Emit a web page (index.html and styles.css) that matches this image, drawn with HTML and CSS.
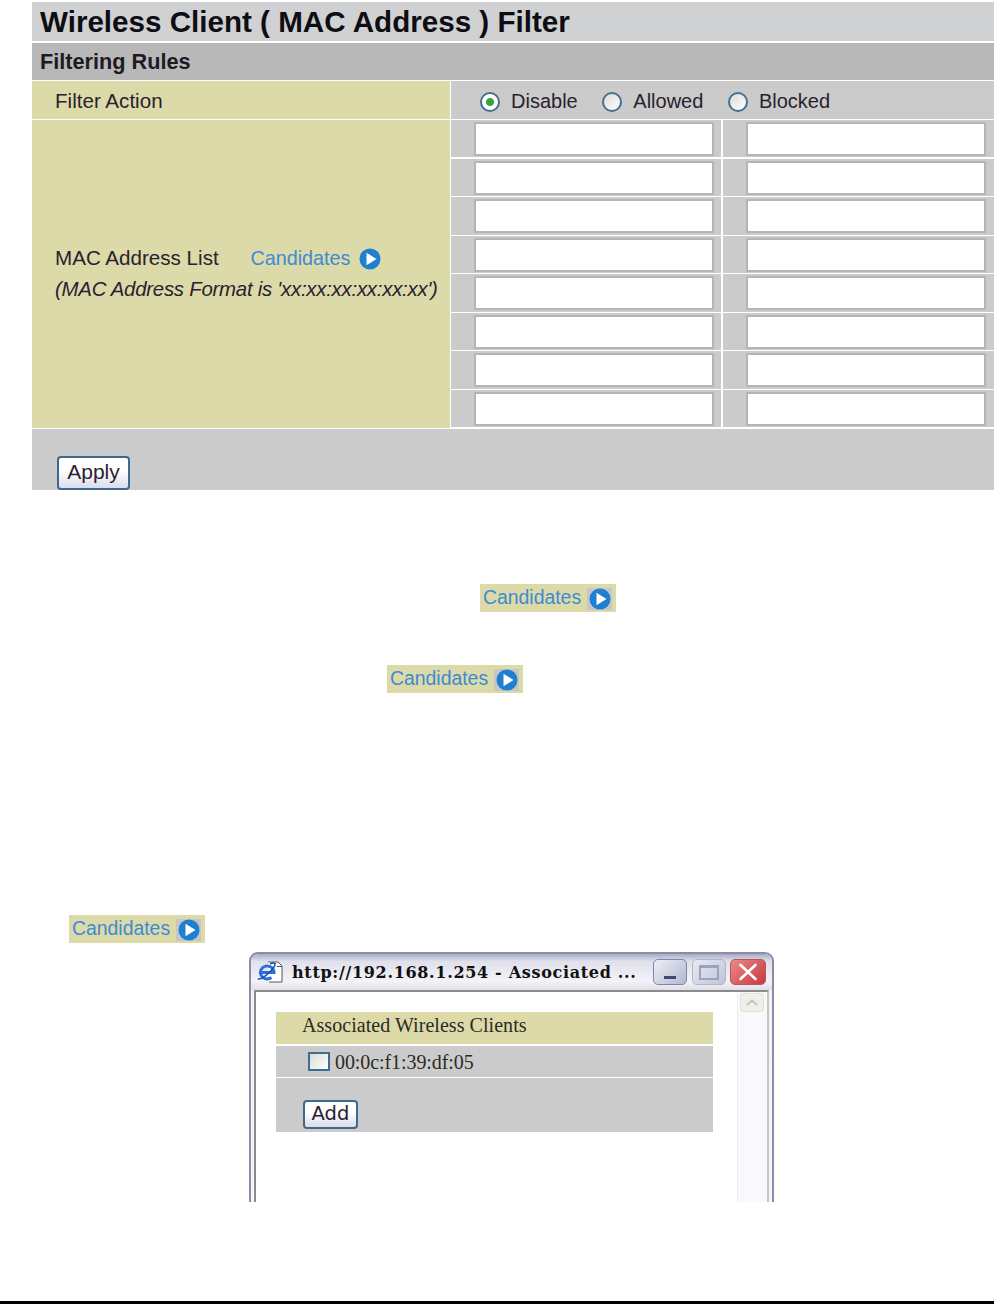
FILE: index.html
```html
<!DOCTYPE html>
<html lang="en">
<head>
<meta charset="utf-8">
<title>Wireless Client ( MAC Address ) Filter</title>
<link rel="stylesheet" href="styles.css">
</head>
<body>
<svg class="defs" width="0" height="0" aria-hidden="true">
  <symbol id="go" viewBox="0 0 22 22">
    <circle cx="11" cy="11" r="10.5" fill="#1f7fd0"/>
    <path d="M7.5 4.8 L17.5 11 L7.5 17.2 Z" fill="#fff"/>
  </symbol>
</svg>
<main class="panel">
  <h1 class="title">Wireless Client ( MAC Address ) Filter</h1>
  <h2 class="subtitle">Filtering Rules</h2>
  <div class="action-row">
    <div class="label-cell action-label">Filter Action</div>
    <div class="radio-cell">
      <label class="radio-item"><input class="radio" type="radio" name="a" checked>Disable</label>
      <label class="radio-item"><input class="radio" type="radio" name="a">Allowed</label>
      <label class="radio-item"><input class="radio" type="radio" name="a">Blocked</label>
    </div>
  </div>
  <div class="list-row">
    <div class="label-cell list-label">
      <div class="list-line">MAC Address List <a class="cand inline-cand">Candidates <svg class="go"><use href="#go"/></svg></a></div>
      <div class="format">(MAC Address Format is 'xx:xx:xx:xx:xx:xx')</div>
    </div>
    <div class="inputs">
      <div class="cell"><input class="mac" type="text"></div><div class="cell"><input class="mac" type="text"></div>
      <div class="cell"><input class="mac" type="text"></div><div class="cell"><input class="mac" type="text"></div>
      <div class="cell"><input class="mac" type="text"></div><div class="cell"><input class="mac" type="text"></div>
      <div class="cell"><input class="mac" type="text"></div><div class="cell"><input class="mac" type="text"></div>
      <div class="cell"><input class="mac" type="text"></div><div class="cell"><input class="mac" type="text"></div>
      <div class="cell"><input class="mac" type="text"></div><div class="cell"><input class="mac" type="text"></div>
      <div class="cell"><input class="mac" type="text"></div><div class="cell"><input class="mac" type="text"></div>
      <div class="cell"><input class="mac" type="text"></div><div class="cell"><input class="mac" type="text"></div>
    </div>
  </div>
  <div class="apply-row"><button class="btn apply" type="button">Apply</button></div>
</main>

<div class="chip-line first"><a class="cand chip"><span class="chip-text">Candidates</span><span class="go-box"><svg class="go"><use href="#go"/></svg></span></a></div>
<div class="chip-line second"><a class="cand chip"><span class="chip-text">Candidates</span><span class="go-box"><svg class="go"><use href="#go"/></svg></span></a></div>
<div class="chip-line third"><a class="cand chip"><span class="chip-text">Candidates</span><span class="go-box"><svg class="go"><use href="#go"/></svg></span></a></div>

<section class="window">
  <header class="titlebar">
    <svg class="ie" viewBox="0 0 26 24" aria-hidden="true">
      <path d="M11 2h10l4 4v16H12" fill="#fff" stroke="#555" stroke-width="1"/>
      <path d="M20 6v0.5h5" fill="none" stroke="#555" stroke-width="1"/>
      <path d="M4.5 12.5 H17 A6.8 6.5 0 1 0 14.5 17.5" fill="none" stroke="#2b6fdc" stroke-width="3"/>
      <path d="M1 18.5 C2 20 6 18 10 14.5 C15 10 19 6 18 3.5 C17 2.5 15 3 13 4" fill="none" stroke="#1b4fb4" stroke-width="1.6"/>
    </svg>
    <span class="win-title">http://192.168.1.254 - Associated ...</span>
    <span class="win-btn min"><i class="min-bar"></i></span>
    <span class="win-btn max"><i class="max-box"></i></span>
    <span class="win-btn close">
      <svg viewBox="0 0 20 20" aria-hidden="true"><path d="M2.5 3 L17.5 17 M17.5 3 L2.5 17" stroke="#fff" stroke-width="2.6" stroke-linecap="round"/></svg>
    </span>
  </header>
  <div class="win-body">
    <div class="content">
      <div class="assoc-head">Associated Wireless Clients</div>
      <div class="assoc-row"><input class="check" type="checkbox"><span class="assoc-mac">00:0c:f1:39:df:05</span></div>
      <div class="assoc-foot"><button class="btn add" type="button">Add</button></div>
    </div>
    <div class="scrollbar">
      <span class="scroll-up">
        <svg viewBox="0 0 22 20" aria-hidden="true"><path d="M5 13 L11 7.5 L17 13" fill="none" stroke="#c3c7c4" stroke-width="2.5"/></svg>
      </span>
    </div>
  </div>
</section>
<div class="footer-rule"></div>
</body>
</html>
```
FILE: styles.css
```css
* { box-sizing: border-box; }
html, body { margin: 0; padding: 0; }
body {
  position: relative;
  width: 994px;
  height: 1304px;
  overflow: hidden;
  background: #fff;
  font-family: "Liberation Sans", Arial, sans-serif;
  color: #2a2130;
  padding-top: 2px;
}
.defs { position: absolute; }
.panel { margin-left: 32px; width: 962px; }
.title {
  margin: 0;
  height: 39px;
  padding-left: 8px;
  background: #d0d1d3;
  color: #0d0d12;
  font-size: 29.6px;
  line-height: 40px;
  font-weight: bold;
}
.subtitle {
  margin: 2px 0 0;
  height: 37px;
  padding-left: 8px;
  background: #b8b8b8;
  color: #1d1a24;
  font-size: 21.7px;
  line-height: 38px;
  font-weight: bold;
}
.action-row { display: flex; margin-top: 1px; height: 38px; gap: 1px; }
.label-cell { width: 418px; background: #dcdaa9; padding-left: 23px; font-size: 20.6px; }
.action-label { line-height: 39px; }
.radio-cell {
  flex: 1;
  display: flex;
  align-items: center;
  gap: 24.6px;
  padding: 3px 0 0 29px;
  background: #cbcbcb;
  font-size: 20px;
}
.radio-item { display: flex; align-items: center; gap: 11px; }
.radio {
  appearance: none;
  margin: 0;
  width: 20px;
  height: 20px;
  border-radius: 50%;
  border: 2px solid #47708f;
  background: linear-gradient(135deg, #dcdcd6, #fff);
}
.radio:checked {
  background: radial-gradient(circle, #2fa83c 0 3.5px, #fff 4.5px);
}
.list-row { display: flex; margin-top: 1px; height: 308px; gap: 1px; }
.list-label { display: flex; flex-direction: column; justify-content: center; padding-bottom: 1px; }
.list-line { line-height: 31px; white-space: pre-wrap; }
.inline-cand { margin-left: 26px; font-size: 19.8px; }
.format { font-style: italic; line-height: 31px; font-size: 20.4px; white-space: nowrap; letter-spacing: -0.25px; }
.cand { color: #3f8ad2; }
.go { display: inline-block; width: 22px; height: 22px; vertical-align: -5px; margin-left: 3px; }
.inputs {
  flex: 1;
  display: grid;
  grid-template-columns: 270px 271px;
  grid-auto-rows: 37.4px;
  gap: 1.2px 2px;
}
.cell { background: #cbcbcb; padding: 2px 8px 0 23px; }
.mac {
  display: block;
  width: 240px;
  height: 34px;
  margin: 0;
  border: 2px solid #b2b6ba;
  background: #fff;
}
.apply-row { margin-top: 1px; height: 61px; padding: 27px 0 0 25px; background: #cbcbcb; }
.btn {
  display: block;
  margin: 0;
  padding: 0 0 2px;
  border: 2px solid #3c6a8e;
  border-radius: 4px;
  background: linear-gradient(#fff 40%, #dcdcec);
  color: #2a2130;
  font-family: "Liberation Sans", Arial, sans-serif;
}
.apply { width: 73px; height: 34px; font-size: 21px; }
.chip-line { display: flex; }
.chip {
  display: flex;
  align-items: center;
  width: 136px;
  height: 28px;
  padding-left: 3px;
  background: #dcdaa9;
  font-size: 19.4px;
  white-space: nowrap;
}
.chip-text { display: block; margin-top: -2px; }
.go-box {
  display: flex;
  align-items: center;
  justify-content: center;
  width: 25px;
  height: 22px;
  margin: 1px 0 0 6px;
  background: #c6c6c8;
}
.go-box .go { margin: 0; display: block; }
.first { margin: 94px 0 0 480px; }
.second { margin: 53px 0 0 387px; }
.third { margin: 222px 0 0 69px; }
.window {
  margin: 9px 0 0 249px;
  width: 525px;
  height: 250px;
  border: 2px solid #8a8ca8;
  border-bottom: 0;
  border-radius: 9px 9px 0 0;
  overflow: hidden;
  background: linear-gradient(#f1f1f6, #f6f6fa);
  display: flex;
  flex-direction: column;
}
.titlebar {
  display: flex;
  align-items: center;
  height: 36px;
  flex: none;
  padding: 0 6px;
  background: linear-gradient(#a9abc3, #dfe0ea 20%, #f3f3f8 75%, #dfdfe6);
}
.ie { width: 26px; height: 24px; flex: none; }
.win-title {
  flex: 1;
  margin-left: 9px;
  font-family: "DejaVu Serif", serif;
  font-weight: bold;
  font-size: 16px;
  letter-spacing: 0.68px;
  color: #111;
  white-space: nowrap;
  overflow: hidden;
}
.win-btn {
  display: flex;
  align-items: center;
  justify-content: center;
  height: 26px;
  border-radius: 5px;
  border: 1px solid #7e86ac;
  flex: none;
}
.win-btn.min { width: 34px; background: linear-gradient(135deg, #eef0f6, #b3b8d2); }
.min-bar { width: 12px; height: 3px; background: #3c4a78; margin-top: 11px; }
.win-btn.max { width: 34px; margin-left: 5px; background: linear-gradient(135deg, #e9ebf2, #bfc3d8); border-color: #b0b4cb; }
.max-box { width: 20px; height: 15px; border: 2px solid #9da3bd; border-top-width: 3px; }
.win-btn.close { width: 36px; margin-left: 4px; background: linear-gradient(135deg, #ea8a8a, #c9393f); border-color: #b7575a; }
.win-btn.close svg { width: 24px; height: 20px; }
.win-body {
  flex: 1;
  display: flex;
  margin: 0 3px 0 3px;
  border: 2px solid #8b8b8b;
  border-bottom: 0;
  border-right-color: #c9c7bb;
  background: #fff;
}
.content { flex: 1; padding: 20px 0 0 20px; }
.assoc-head, .assoc-row, .assoc-foot { width: 437px; font-family: "Liberation Serif", serif; font-size: 20px; color: #2b2b24; }
.assoc-head { height: 32px; padding-left: 26px; background: #dcdaa9; line-height: 26px; letter-spacing: 0.05px; }
.assoc-row { display: flex; align-items: center; margin-top: 2px; height: 31px; padding-left: 32px; background: #cbcbcb; letter-spacing: -0.08px; }
.assoc-mac { margin: 1px 0 0 1px; }
.check {
  appearance: none;
  width: 22px;
  height: 19px;
  margin: 0 4px 0 0;
  border: 2px solid #3f6d8f;
  background: linear-gradient(135deg, #dcdcd6, #fff);
}
.assoc-foot { margin-top: 1px; height: 54px; padding: 22px 0 0 27px; background: #cbcbcb; }
.add { width: 55px; height: 29px; font-family: "DejaVu Sans", sans-serif; font-size: 19.5px; line-height: 22px; }
.scrollbar { flex: none; width: 30px; background: #f8f9fc; border-left: 1px solid #eee; padding: 1px 2px; }
.scroll-up {
  display: block;
  width: 24px;
  height: 19px;
  border: 1px solid #e2e2d4;
  border-radius: 3px;
  background: #f0f0e8;
}
.scroll-up svg { display: block; width: 100%; height: 100%; }
.footer-rule { position: absolute; left: 0; bottom: 0; width: 994px; height: 3px; background: #000; }
```
